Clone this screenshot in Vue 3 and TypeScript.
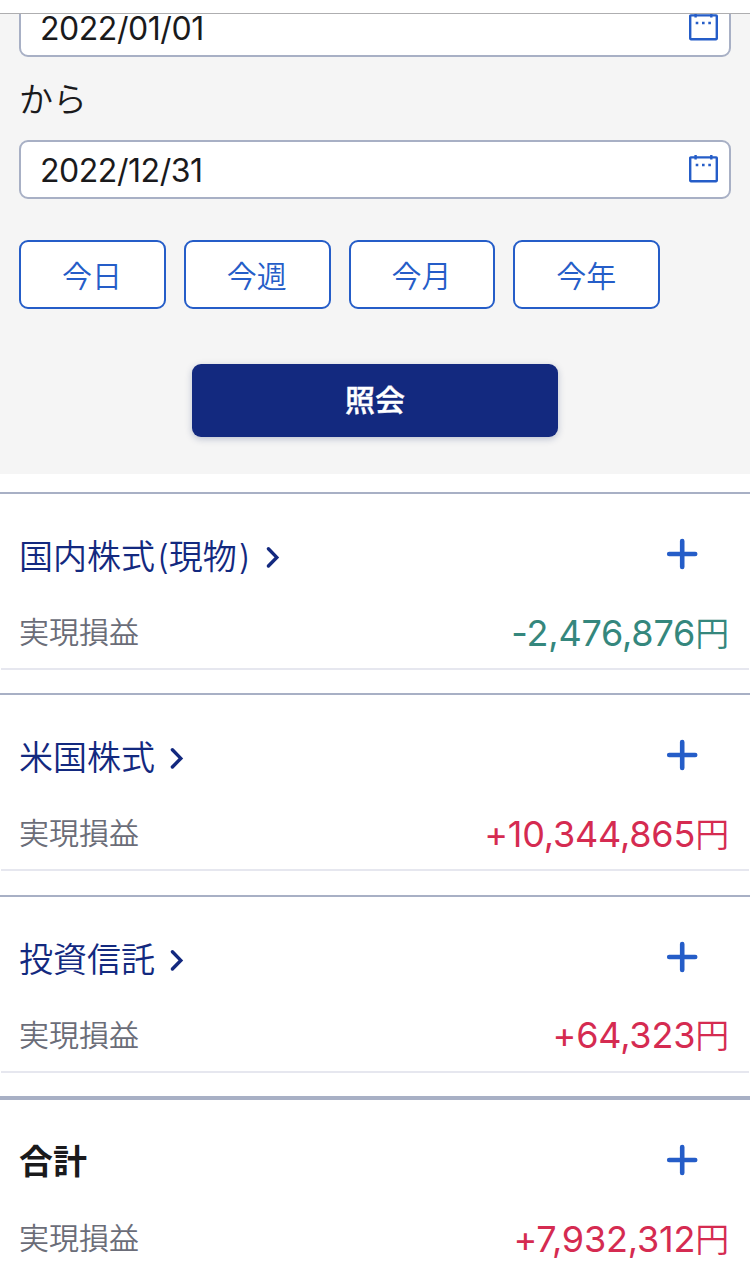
<script setup lang="ts">
interface Summary {
  title: string
  amount: string
  gain: boolean
  total?: boolean
}

const dates: string[] = ['2022/01/01', '2022/12/31']
const presets: string[] = ['今日', '今週', '今月', '今年']
const summaries: Summary[] = [
  { title: '国内株式(現物)', amount: '-2,476,876', gain: false },
  { title: '米国株式', amount: '+10,344,865', gain: true },
  { title: '投資信託', amount: '+64,323', gain: true },
  { title: '合計', amount: '+7,932,312', gain: true, total: true },
]

// Splits a title into runs so that parentheses can be spaced on their own.
const runs = (title: string): string[] => title.split(/([()])/).filter(Boolean)
</script>

<template>
  <main class="page">
    <div class="topbar"></div>
    <section class="filter">
      <template v-for="(date, i) in dates" :key="date">
        <div class="field">
          <span class="date">{{ date }}</span>
          <svg class="calendar" width="30" height="30" viewBox="0 0 30 30" fill="none" stroke="#255dc8">
            <rect x="1.2" y="3.4" width="26.6" height="23.8" rx="0.6" stroke-width="2.4" />
            <path d="M6.6 1V5.6M22.3 1V5.6" stroke-width="2.4" />
            <path d="M6.7 11h2.6M13 11h2.6M19.3 11h2.6" stroke-width="2.6" />
          </svg>
        </div>
        <p v-if="i === 0" class="from">から</p>
      </template>
      <div class="presets">
        <button v-for="preset in presets" :key="preset" class="preset" type="button">{{ preset }}</button>
      </div>
      <button class="submit" type="button">照会</button>
    </section>

    <section v-for="item in summaries" :key="item.title" class="summary" :class="{ total: item.total }">
      <div class="heading">
        <h2 class="title"><span v-for="(run, i) in runs(item.title)" :key="i" :class="{ paren: run === '(' || run === ')' }">{{ run }}</span></h2>
        <svg v-if="!item.total" class="chevron" width="16" height="24" viewBox="0 0 16 24" fill="none">
          <path d="M3.4 3.8L11.8 12.4L3.4 21" stroke="#13297f" stroke-width="3.4" stroke-linecap="round" stroke-linejoin="miter" />
        </svg>
        <svg class="plus" width="32" height="32" viewBox="0 0 32 32" fill="none">
          <path d="M3.2 16H29.2M16.2 3V29" stroke="#255dc8" stroke-width="4.6" stroke-linecap="round" />
        </svg>
      </div>
      <div class="result">
        <span class="label">実現損益</span>
        <span class="amount" :class="item.gain ? 'gain' : 'loss'">{{ item.amount }}<span class="yen">円</span></span>
      </div>
    </section>
  </main>
</template>

<style>
body {
  margin: 0;
  background: #fff;
}
</style>

<style scoped>
.page {
  width: 750px;
  height: 1263px;
  overflow: hidden;
  background: #fff;
  color: #1a1a1c;
  font-family: Inter, "Noto Sans CJK JP", sans-serif;
}
.page * {
  box-sizing: border-box;
}
.topbar {
  height: 14px;
  border-bottom: 1px solid #aeaeb0;
}
.filter {
  height: 459.5px;
  margin-bottom: 18.5px;
  padding: 0 19px;
  overflow: hidden;
  background: #f5f5f5;
}
.field {
  display: flex;
  align-items: center;
  justify-content: space-between;
  height: 59px;
  padding: 0 10px 0 19px;
  border: 2px solid #a8b0c5;
  border-radius: 9px;
  background: #fff;
  width: 712px;
}
.field:first-child {
  margin-top: -16px;
}
.date {
  padding-top: 2px;
  font-size: 32px;
  font-feature-settings: "calt" 0;
  line-height: 32px;
  letter-spacing: -0.45px;
}
.calendar {
  margin-top: -2px;
}
.from {
  margin: 0;
  height: 83px;
  font-size: 34px;
  font-weight: 350;
  line-height: 86px;
}
.presets {
  display: flex;
  gap: 18px;
  margin-top: 41px;
}
.preset {
  width: 146.8px;
  height: 69px;
  padding: 0 1px 1px 0;
  border: 2px solid #255dc8;
  border-radius: 9px;
  background: #fff;
  color: #255dc8;
  font-family: "Noto Sans CJK JP", sans-serif;
  font-size: 30px;
  font-weight: 350;
  line-height: 62px;
}
.submit {
  display: block;
  width: 366px;
  height: 73px;
  margin: 55px auto 0;
  padding: 0;
  border: 0;
  border-radius: 9px;
  background: #13297f;
  box-shadow: 0 2px 7px rgba(19, 41, 100, 0.25);
  color: #fff;
  font-family: inherit;
  font-size: 30px;
  font-weight: 500;
  -webkit-text-stroke: 0.4px #fff;
  line-height: 71px;
}
.summary {
  height: 201.4px;
  border-top: 2px solid #a8b0c5;
  padding-top: 27px;
}
.heading {
  display: flex;
  align-items: center;
  height: 72px;
  padding: 0 52px 0 19px;
}
.title {
  margin: 0;
  color: #13297f;
  font-size: 34px;
  font-weight: 350;
  line-height: 72px;
}
.paren {
  margin-left: 2px;
}
.chevron {
  margin-left: 14px;
}
.plus {
  margin: -6px 0 0 auto;
}
.result {
  display: flex;
  align-items: center;
  justify-content: space-between;
  height: 77px;
  margin: 0 1px;
  padding: 3px 20px 0 18px;
  border-bottom: 2.5px solid #e6e7ef;
}
.label {
  color: #6b6d78;
  font-size: 30px;
  font-weight: 350;
  line-height: 40px;
}
.amount {
  padding-top: 2px;
  font-size: 36px;
  font-feature-settings: "calt" 0;
  line-height: 44px;
  letter-spacing: -0.2px;
}
.yen {
  font-size: 34px;
  font-weight: 350;
}
.gain {
  color: #d52b51;
}
.loss {
  color: #35877d;
}
.total {
  border-top-width: 4px;
}
.total .title {
  color: #1a1a1c;
  font-weight: 700;
  line-height: 70px;
  margin-top: -2px;
}
</style>
